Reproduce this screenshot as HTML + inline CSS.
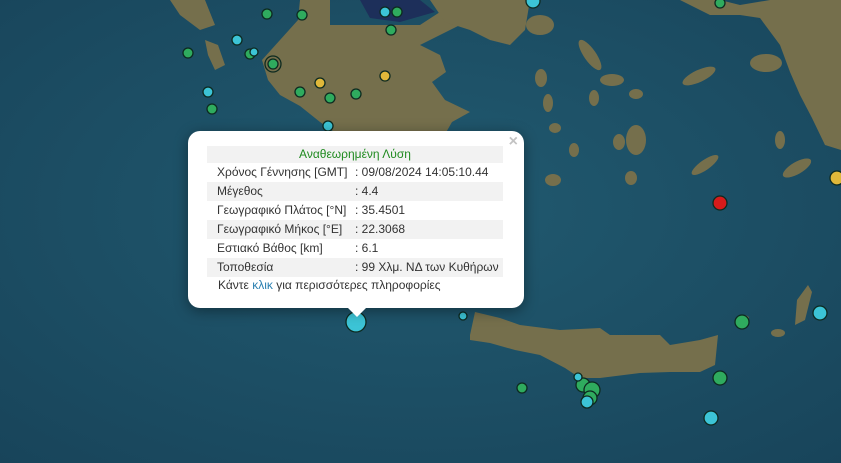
<!DOCTYPE html>
<html><head><meta charset="utf-8"><style>
html,body{margin:0;padding:0;width:841px;height:463px;overflow:hidden;background:#1f5166}
svg{position:absolute;left:0;top:0}
.pop{position:absolute;left:188px;top:131px;width:336px;height:177px;background:#fff;border-radius:12px;box-shadow:0 3px 14px rgba(0,0,0,.4);font-family:"Liberation Sans",Arial,sans-serif;font-size:12px;color:#333}
.tip{position:absolute;left:347px;top:307px;width:0;height:0;border-left:10px solid transparent;border-right:10px solid transparent;border-top:10px solid #fff}
table{position:absolute;left:19px;top:15px;border-collapse:collapse;width:296px;table-layout:fixed}
td{height:19px;padding:0 0 0 10px;white-space:nowrap;line-height:19px;overflow:hidden}
td.l{width:141px}
td.v{padding-left:0}
tr.s td{background:#f2f2f2}
.h td{color:#1f8a1f;text-align:center;height:17px;line-height:17px}
.more{position:absolute;left:30px;top:147px}
.more a{color:#2a7fb0;text-decoration:none}
.x{position:absolute;right:6px;top:2px;color:#c3c3c3;font:bold 16px "Liberation Sans",sans-serif}
</style></head><body>
<svg width="841" height="463" viewBox="0 0 841 463">
<defs><radialGradient id="g" cx="0.5" cy="0.45" r="0.75"><stop offset="0" stop-color="#215a70"/><stop offset="1" stop-color="#18445a"/></radialGradient></defs>
<rect width="841" height="463" fill="url(#g)"/>
<g fill="#756f4c">
<polygon points="262,60 280,40 298,20 300,0 330,0 330,25 420,25 440,12 470,20 440,35 420,45 440,55 446,72 432,82 445,100 470,112 452,122 444,136 340,136 320,122 300,106 280,95 268,80"/>
<polygon points="430,0 530,0 525,30 510,45 490,40 470,30 445,22"/>
<polygon points="170,0 205,0 215,25 200,30 180,15"/>
<polygon points="205,40 218,45 225,65 215,70 208,55"/>
<polygon points="680,0 720,0 740,5 770,0 841,0 841,150 825,145 812,118 800,95 790,72 780,45 760,18 740,15 710,15"/>
<polygon points="470,335 475,312 500,318 520,325 560,330 600,328 610,335 660,335 670,345 700,340 718,335 715,365 700,372 670,372 640,373 600,378 580,378 565,368 540,355 515,350 490,343 470,340"/>
<polygon points="797,300 808,285 812,292 805,320 795,325"/>
<ellipse cx="540" cy="25" rx="14" ry="10"/>
<ellipse cx="590" cy="55" rx="6" ry="18" transform="rotate(-35 590 55)"/>
<ellipse cx="612" cy="80" rx="12" ry="6"/>
<ellipse cx="541" cy="78" rx="6" ry="9"/>
<ellipse cx="548" cy="103" rx="5" ry="9"/>
<ellipse cx="594" cy="98" rx="5" ry="8"/>
<ellipse cx="636" cy="94" rx="7" ry="5"/>
<ellipse cx="555" cy="128" rx="6" ry="5"/>
<ellipse cx="636" cy="140" rx="10" ry="15"/>
<ellipse cx="619" cy="142" rx="6" ry="8"/>
<ellipse cx="574" cy="150" rx="5" ry="7"/>
<ellipse cx="705" cy="165" rx="16" ry="5" transform="rotate(-35 705 165)"/>
<ellipse cx="699" cy="76" rx="18" ry="6" transform="rotate(-25 699 76)"/>
<ellipse cx="766" cy="63" rx="16" ry="9"/>
<ellipse cx="797" cy="168" rx="16" ry="6" transform="rotate(-30 797 168)"/>
<ellipse cx="553" cy="180" rx="8" ry="6"/>
<ellipse cx="631" cy="178" rx="6" ry="7"/>
<ellipse cx="780" cy="140" rx="5" ry="9"/>
<ellipse cx="835" cy="135" rx="10" ry="10"/>
<ellipse cx="743" cy="318" rx="6" ry="3"/>
<ellipse cx="778" cy="333" rx="7" ry="4"/>
</g>
<path d="M360 0 L420 0 L435 12 L400 22 L370 18Z" fill="#1d2f5a"/>
<g stroke="#0d2a20" stroke-width="1.3">
<g fill="#2fab5e">
<circle cx="267" cy="14" r="5"/><circle cx="302" cy="15" r="5"/><circle cx="397" cy="12" r="5"/><circle cx="391" cy="30" r="5"/>
<circle cx="188" cy="53" r="5"/><circle cx="250" cy="54" r="5"/><circle cx="273" cy="64" r="5"/><circle cx="212" cy="109" r="5"/>
<circle cx="300" cy="92" r="5"/><circle cx="330" cy="98" r="5"/><circle cx="356" cy="94" r="5"/><circle cx="720" cy="3" r="5"/>
<circle cx="742" cy="322" r="7"/><circle cx="720" cy="378" r="7"/><circle cx="522" cy="388" r="5"/>
<circle cx="583" cy="385" r="7"/><circle cx="592" cy="390" r="8"/><circle cx="590" cy="398" r="7"/>
</g>
<circle cx="273" cy="64" r="8" fill="none"/>
<g fill="#3cc4d6">
<circle cx="237" cy="40" r="5"/><circle cx="385" cy="12" r="5"/><circle cx="254" cy="52" r="4"/><circle cx="208" cy="92" r="5"/>
<circle cx="328" cy="126" r="5"/><circle cx="533" cy="1" r="7"/><circle cx="463" cy="316" r="4"/><circle cx="356" cy="322" r="10"/>
<circle cx="820" cy="313" r="7"/><circle cx="711" cy="418" r="7"/><circle cx="578" cy="377" r="4"/><circle cx="587" cy="402" r="6"/>
</g>
<g fill="#e0b83a"><circle cx="320" cy="83" r="5"/><circle cx="385" cy="76" r="5"/><circle cx="837" cy="178" r="7"/></g>
<circle cx="720" cy="203" r="7" fill="#d61b1b"/>
</g>
</svg>
<div class="pop">
<span class="x">×</span>
<table>
<tr class="s h"><td colspan="2" style="padding:0">Αναθεωρημένη Λύση</td></tr>
<tr><td class="l">Χρόνος Γέννησης [GMT]</td><td class="v">: 09/08/2024 14:05:10.44</td></tr>
<tr class="s"><td class="l">Μέγεθος</td><td class="v">: 4.4</td></tr>
<tr><td class="l">Γεωγραφικό Πλάτος [°N]</td><td class="v">: 35.4501</td></tr>
<tr class="s"><td class="l">Γεωγραφικό Μήκος [°E]</td><td class="v">: 22.3068</td></tr>
<tr><td class="l">Εστιακό Βάθος [km]</td><td class="v">: 6.1</td></tr>
<tr class="s"><td class="l">Τοποθεσία</td><td class="v">: 99 Χλμ. ΝΔ των Κυθήρων</td></tr>
</table>
<div class="more">Κάντε <a>κλικ</a> για περισσότερες πληροφορίες</div>
</div>
<div class="tip"></div>
</body></html>
